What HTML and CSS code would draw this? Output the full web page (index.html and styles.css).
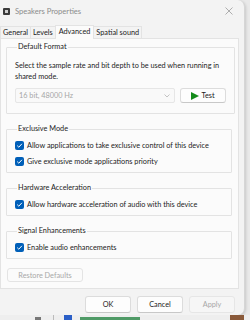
FILE: index.html
```html
<!DOCTYPE html>
<html lang="en">
<head>
    <meta charset="UTF-8">
    <meta name="viewport" content="width=device-width, initial-scale=1.0">
    <title>Speakers Properties</title>
    <link rel="stylesheet" href="styles.css">
</head>
<body>
    <div class="window">
        <div class="titlebar">
            <svg class="app-icon" width="7" height="7" viewBox="0 0 7 7">
                <rect x="0" y="0" width="7" height="7" rx="1" fill="#3a3a3a"/>
                <rect x="2" y="2" width="3" height="3" fill="#cfcfcf"/>
            </svg>
            <span class="title">Speakers Properties</span>
            <svg class="close" width="8" height="8" viewBox="0 0 8 8">
                <path d="M0.5 0.5 L7.5 7.5 M7.5 0.5 L0.5 7.5" stroke="#9a9a9a" stroke-width="0.8"/>
            </svg>
        </div>

        <div class="tabs">
            <span class="tab">General</span>
            <span class="tab">Levels</span>
            <span class="tab active">Advanced</span>
            <span class="tab">Spatial sound</span>
        </div>

        <div class="panel">
            <fieldset class="group">
                <legend>Default Format</legend>
                <p class="desc">Select the sample rate and bit depth to be used when running in<br>shared mode.</p>
                <div class="format-row">
                    <div class="select">
                        <span>16 bit, 48000 Hz</span>
                        <svg width="6" height="4" viewBox="0 0 6 4"><path d="M0.5 0.5 L3 3 L5.5 0.5" fill="none" stroke="#b5b5b5" stroke-width="0.8"/></svg>
                    </div>
                    <button class="btn test"><span class="play"></span>Test</button>
                </div>
            </fieldset>

            <fieldset class="group">
                <legend>Exclusive Mode</legend>
                <div class="checks">
                    <label class="check"><span class="box"><svg width="7" height="7" viewBox="0 0 7 7"><path d="M1.2 3.6 L2.8 5.2 L5.9 1.8" fill="none" stroke="#fff" stroke-width="1"/></svg></span>Allow applications to take exclusive control of this device</label>
                    <label class="check"><span class="box"><svg width="7" height="7" viewBox="0 0 7 7"><path d="M1.2 3.6 L2.8 5.2 L5.9 1.8" fill="none" stroke="#fff" stroke-width="1"/></svg></span>Give exclusive mode applications priority</label>
                </div>
            </fieldset>

            <fieldset class="group">
                <legend>Hardware Acceleration</legend>
                <div class="checks">
                    <label class="check"><span class="box"><svg width="7" height="7" viewBox="0 0 7 7"><path d="M1.2 3.6 L2.8 5.2 L5.9 1.8" fill="none" stroke="#fff" stroke-width="1"/></svg></span>Allow hardware acceleration of audio with this device</label>
                </div>
            </fieldset>

            <fieldset class="group">
                <legend>Signal Enhancements</legend>
                <div class="checks">
                    <label class="check"><span class="box"><svg width="7" height="7" viewBox="0 0 7 7"><path d="M1.2 3.6 L2.8 5.2 L5.9 1.8" fill="none" stroke="#fff" stroke-width="1"/></svg></span>Enable audio enhancements</label>
                </div>
            </fieldset>

            <button class="btn restore">Restore Defaults</button>
        </div>

        <div class="actions">
            <button class="btn">OK</button>
            <button class="btn">Cancel</button>
            <button class="btn disabled">Apply</button>
        </div>
    </div>

    <div class="taskbar">
        <span class="tb-num"></span>
        <span class="tb-sep"></span>
        <span class="tb-icon"></span>
        <span class="tb-link"></span>
        <span class="tb-pic"></span>
    </div>
</body>
</html>
```

FILE: styles.css
```css
* {
    box-sizing: border-box;
}

body {
    margin: 0;
    width: 250px;
    height: 320px;
    overflow: hidden;
    background-color: #e9e9e9;
    font-family: Lato, "Noto Sans", sans-serif;
    font-size: 7.3px;
    color: #1b1b1b;
}

.window {
    width: 250px;
    height: 315px;
    margin-left: -5px;
    background-color: #f3f3f3;
    border-radius: 0 7px 7px 0;
    border-right: 1px solid #d6d6d6;
    box-shadow: 1px 1px 3px rgba(0, 0, 0, 0.15);
    display: flex;
    flex-direction: column;
}

.titlebar {
    height: 25px;
    display: flex;
    align-items: center;
    padding: 0 11px 3px 8px;
}

.app-icon {
    margin-right: 5px;
}

.title {
    flex: 1;
    font-size: 7.6px;
    color: #8c8c8c;
}

.tabs {
    height: 13px;
    display: flex;
    align-items: flex-end;
    padding-left: 5px;
}

.tab {
    padding: 0 2px;
    height: 12px;
    line-height: 11px;
    border: 1px solid #e3e3e3;
    border-bottom: none;
    margin-right: -1px;
    background-color: #f3f3f3;
}

.tab.active {
    height: 14px;
    background-color: #fbfbfb;
    position: relative;
    top: 1px;
    padding: 0 3px;
}

.panel {
    height: 251px;
    margin: 0 5px;
    padding: 2px 6px 0 5px;
    background-color: #fbfbfb;
    border: 1px solid #e3e3e3;
}

.group {
    margin: 0 0 9px 0;
    padding: 3px 8px 4px 8px;
    border: 1px solid #e3e3e3;
    border-radius: 1px;
}

.group legend {
    padding: 0 1px;
    margin-left: 2px;
    line-height: 12px;
}

.desc {
    margin: 4px 0 6px 0;
    line-height: 11px;
}

.format-row {
    display: flex;
    gap: 5px;
    margin-bottom: 6px;
}

.select {
    width: 160px;
    height: 15px;
    display: flex;
    align-items: center;
    justify-content: space-between;
    padding: 0 4px 0 3px;
    background-color: #f9f9f9;
    border: 1px solid #e6e6e6;
    border-radius: 2px;
    color: #a6a6a6;
}

.btn {
    font-family: inherit;
    font-size: 7.3px;
    color: #1b1b1b;
    background-color: #fdfdfd;
    border: 1px solid #dcdcdc;
    border-bottom-color: #c8c8c8;
    border-radius: 3px;
    padding: 0;
}

.test {
    width: 46px;
    height: 15px;
    display: flex;
    align-items: center;
    justify-content: center;
    gap: 2px;
}

.play {
    width: 0;
    height: 0;
    border-top: 4px solid transparent;
    border-bottom: 4px solid transparent;
    border-left: 8px solid #138a1a;
}

.checks {
    display: flex;
    flex-direction: column;
    gap: 2px;
}

.check {
    display: flex;
    align-items: center;
    gap: 3px;
    height: 14px;
}

.box {
    width: 9px;
    height: 9px;
    border-radius: 2px;
    background-color: #005fb8;
    display: flex;
    align-items: center;
    justify-content: center;
}

.restore {
    width: 76px;
    height: 14px;
    margin-left: 1px;
    color: #a8a8a8;
    border-color: #e4e4e4;
    background-color: #fbfbfb;
}

.actions {
    display: flex;
    justify-content: flex-end;
    gap: 6px;
    padding: 7px 9px 0 0;
}

.actions .btn {
    width: 46px;
    height: 17px;
}

.actions .disabled {
    color: #a8a8a8;
    background-color: #f6f6f6;
    border-color: #e6e6e6;
}

.taskbar {
    height: 5px;
    display: flex;
    align-items: flex-start;
    overflow: hidden;
    background-color: #eeeeee;
}

.tb-num {
    width: 6px;
    height: 3px;
    margin: 2px 0 0 35px;
    background-color: #777;
}

.tb-sep {
    width: 1px;
    height: 5px;
    margin-left: 12px;
    background-color: #bbb;
}

.tb-icon {
    width: 8px;
    height: 5px;
    margin-left: 10px;
    background-color: #2b5fc7;
}

.tb-link {
    width: 60px;
    height: 3px;
    margin: 2px 0 0 8px;
    background-color: #4f9a66;
}

.tb-pic {
    width: 14px;
    height: 5px;
    margin-left: auto;
    margin-right: 6px;
    background-color: #8a5a3a;
}
```
